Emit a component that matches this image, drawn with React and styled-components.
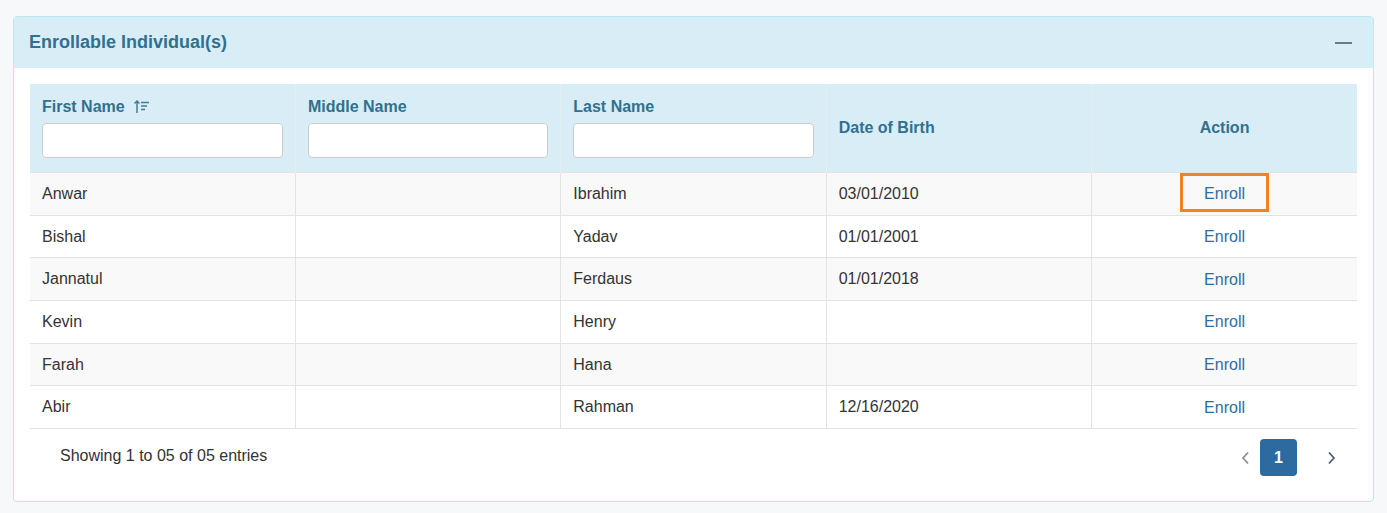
import React from 'react';
import styled, { createGlobalStyle } from 'styled-components';

const GlobalStyle = createGlobalStyle`
  html, body {
    margin: 0;
    padding: 0;
    background: #f6f8fa;
    font-family: "Liberation Sans", Arial, sans-serif;
    color: #333;
  }
  * { box-sizing: border-box; }
`;

const Page = styled.div`
  padding: 16px 13px 12px 13px;
`;

const Card = styled.div`
  background: #fff;
  border: 1px solid #bce8f1;
  border-radius: 4px;
  overflow: hidden;
`;

const CardHeader = styled.div`
  height: 51px;
  background: #d9edf7;
  display: flex;
  align-items: center;
  justify-content: space-between;
  padding: 0 21px 0 15px;
`;

const Title = styled.h3`
  margin: 0;
  font-size: 18px;
  font-weight: bold;
  color: #31708f;
`;

const Collapse = styled.button`
  border: 0;
  background: transparent;
  padding: 0;
  width: 17px;
  height: 17px;
  display: flex;
  align-items: center;
  cursor: pointer;

  &::before {
    content: '';
    display: block;
    width: 17px;
    height: 2px;
    background: #6b7b85;
  }
`;

const CardBody = styled.div`
  padding: 16px 16px 25px 16px;
`;

const Table = styled.table`
  width: 100%;
  border-collapse: collapse;
  table-layout: fixed;
  font-size: 16px;
`;

const Th = styled.th`
  background: #d9edf7;
  color: #31708f;
  font-weight: bold;
  text-align: ${(p) => p.$align || 'left'};
  vertical-align: middle;
  padding: 13px 12px 14px 12px;
  border-left: 1px solid #e6eef2;
  height: 88px;

  &:first-child { border-left: 0; }
`;

const HeadLabel = styled.div`
  display: flex;
  align-items: center;
  gap: 8px;
  height: 19px;
  margin-bottom: 7px;
`;

const FilterInput = styled.input`
  display: block;
  width: 100%;
  height: 35px;
  border: 1px solid #ccc;
  border-radius: 4px;
  background: #fff;
  font: inherit;
  padding: 6px 10px;
`;

const Tr = styled.tr`
  background: ${(p) => (p.$striped ? '#f9f9f9' : '#fff')};
`;

const Td = styled.td`
  height: 42.7px;
  padding: 0 12px;
  border-top: 1px solid #e3e3e3;
  border-left: 1px solid #e3e3e3;
  text-align: ${(p) => p.$align || 'left'};
  vertical-align: middle;
  color: #333;

  &:first-child { border-left: 0; }
  tr:last-child & { border-bottom: 1px solid #e3e3e3; }
`;

const EnrollLink = styled.a`
  display: inline-block;
  color: #2e6da4;
  text-decoration: none;
  padding: ${(p) => (p.$focused ? '8px 21px 6px' : '7px 21px')};
  border: 3px solid ${(p) => (p.$focused ? '#f58220' : 'transparent')};
  line-height: 19px;
  cursor: pointer;
  margin-bottom: ${(p) => (p.$focused ? '2px' : '0')};
`;

const Footer = styled.div`
  display: flex;
  align-items: center;
  justify-content: space-between;
  padding: 10px 0 0 30px;
`;

const Info = styled.div`
  font-size: 16px;
  color: #333;
  margin-bottom: 4px;
`;

const Pager = styled.div`
  display: flex;
  align-items: center;
  padding-right: 7px;
`;

const PageArrow = styled.button`
  border: 0;
  background: transparent;
  width: 37px;
  height: 37px;
  display: flex;
  align-items: center;
  justify-content: center;
  color: ${(p) => (p.$disabled ? '#8a8f94' : '#4a5f73')};
  padding: 0;
`;

const PageNum = styled.button`
  border: 0;
  width: 37px;
  height: 37px;
  border-radius: 4px;
  background: #2c6a9f;
  color: #fff;
  font-weight: bold;
  font-size: 16px;
  font-family: inherit;
  margin: 0 16px 0 -4px;
`;

const SortIcon = () => (
  <svg width="17" height="15" viewBox="0 0 17 15" fill="none" stroke="#4a7a95" strokeWidth="1.5">
    <path d="M4 14V2M1.5 4.5L4 2l2.5 2.5" />
    <path d="M8 3.5h8M8 7h6M8 10.5h4" />
  </svg>
);

const Chevron = ({ dir }) => (
  <svg width="9" height="14" viewBox="0 0 9 14" fill="none" stroke="currentColor" strokeWidth="1.8">
    {dir === 'left' ? <path d="M7 1.5L2 7l5 5.5" /> : <path d="M2 1.5L7 7l-5 5.5" />}
  </svg>
);

const rows = [
  { first: 'Anwar', middle: '', last: 'Ibrahim', dob: '03/01/2010' },
  { first: 'Bishal', middle: '', last: 'Yadav', dob: '01/01/2001' },
  { first: 'Jannatul', middle: '', last: 'Ferdaus', dob: '01/01/2018' },
  { first: 'Kevin', middle: '', last: 'Henry', dob: '' },
  { first: 'Farah', middle: '', last: 'Hana', dob: '' },
  { first: 'Abir', middle: '', last: 'Rahman', dob: '12/16/2020' },
];

export default function App() {
  return (
    <Page>
      <GlobalStyle />
      <Card>
        <CardHeader>
          <Title>Enrollable Individual(s)</Title>
          <Collapse aria-label="collapse" />
        </CardHeader>
        <CardBody>
          <Table>
            <thead>
              <tr>
                <Th>
                  <HeadLabel>First Name <SortIcon /></HeadLabel>
                  <FilterInput />
                </Th>
                <Th>
                  <HeadLabel>Middle Name</HeadLabel>
                  <FilterInput />
                </Th>
                <Th>
                  <HeadLabel>Last Name</HeadLabel>
                  <FilterInput />
                </Th>
                <Th>Date of Birth</Th>
                <Th $align="center">Action</Th>
              </tr>
            </thead>
            <tbody>
              {rows.map((r, i) => (
                <Tr key={r.first} $striped={i % 2 === 0}>
                  <Td>{r.first}</Td>
                  <Td>{r.middle}</Td>
                  <Td>{r.last}</Td>
                  <Td>{r.dob}</Td>
                  <Td $align="center">
                    <EnrollLink $focused={i === 0}>Enroll</EnrollLink>
                  </Td>
                </Tr>
              ))}
            </tbody>
          </Table>
          <Footer>
            <Info>Showing 1 to 05 of 05 entries</Info>
            <Pager>
              <PageArrow $disabled><Chevron dir="left" /></PageArrow>
              <PageNum>1</PageNum>
              <PageArrow><Chevron dir="right" /></PageArrow>
            </Pager>
          </Footer>
        </CardBody>
      </Card>
    </Page>
  );
}
